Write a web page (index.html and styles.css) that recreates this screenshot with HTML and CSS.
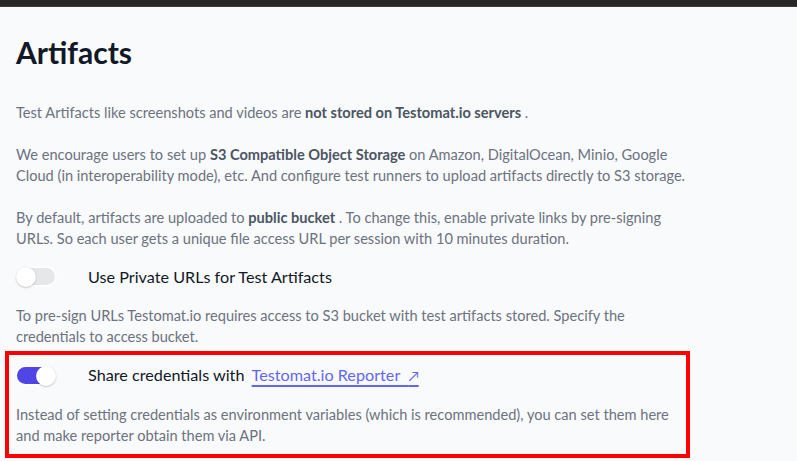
FILE: index.html
```html
<!DOCTYPE html>
<html lang="en">
<head>
<meta charset="utf-8">
<title>Artifacts</title>
<link rel="stylesheet" href="styles.css">
</head>
<body>
<div class="topbar"></div>
<main class="page">
  <h1 class="title">Artifacts</h1>
  <p class="text">Test Artifacts like screenshots and videos are <strong>not stored on Testomat.io servers</strong> .</p>
  <p class="text">We encourage users to set up <strong>S3 Compatible Object Storage</strong> on Amazon, DigitalOcean, Minio, Google Cloud (in interoperability mode), etc. And configure test runners to upload artifacts directly to S3 storage.</p>
  <p class="text">By default, artifacts are uploaded to <strong>public bucket</strong> . To change this, enable private links by pre-signing URLs. So each user gets a unique file access URL per session with 10 minutes duration.</p>

  <div class="setting">
    <div class="toggle-row">
      <span class="toggle-cell"><span class="toggle"><span class="knob"></span></span></span>
      <span class="label">Use Private URLs for Test Artifacts</span>
    </div>
    <p class="text desc">To pre-sign URLs Testomat.io requires access to S3 bucket with test artifacts stored. Specify the credentials to access bucket.</p>
  </div>

  <div class="setting highlighted">
    <div class="toggle-row">
      <span class="toggle-cell"><span class="toggle on"><span class="knob"></span></span></span>
      <span class="label">Share credentials with <a class="link" href="#">Testomat.io Reporter&nbsp;&nbsp;<span class="arrow">↗</span></a></span>
    </div>
    <p class="text desc">Instead of setting credentials as environment variables (which is recommended), you can set them here and make reporter obtain them via API.</p>
  </div>
</main>
</body>
</html>
```
FILE: styles.css
```css
html, body {
  margin: 0;
  padding: 0;
  background: #f9fafb;
}
body {
  font-family: Lato, "Liberation Sans", sans-serif;
  color: #6b7280;
  font-size: 14.6px;
  line-height: 21.5px;
}
.topbar {
  height: 6px;
  background: #272727;
  border-bottom: 1px solid #3a3a3a;
}
.page {
  padding: 0 16px;
  width: 670px;
}
.title {
  margin: 27px 0 0;
  font-size: 30px;
  line-height: 36px;
  font-weight: 700;
  color: #111827;
}
.text {
  margin: 20px 0 0;
}
.page > .title + .text {
  margin-top: 32px;
}
.text strong {
  font-weight: 700;
  color: #4b5563;
}
.setting {
  margin-top: 17px;
}
.toggle-row {
  display: flex;
  align-items: center;
  height: 20px;
}
.toggle-cell {
  width: 72px;
  flex: none;
  display: flex;
  align-items: center;
}
.toggle {
  position: relative;
  display: block;
  width: 38px;
  height: 17px;
  margin-left: 1px;
  border-radius: 9px;
  background: #e5e7eb;
  box-shadow: 0 0 0 1.5px #ffffff;
}
.toggle .knob {
  position: absolute;
  top: -1.5px;
  left: -1px;
  width: 20px;
  height: 20px;
  border-radius: 50%;
  background: #ffffff;
  box-shadow: 0 1px 2px rgba(0, 0, 0, 0.18), 0 0 0 0.5px rgba(0, 0, 0, 0.06);
}
.toggle.on {
  background: #4f46e5;
}
.toggle.on .knob {
  left: auto;
  right: -1px;
}
.label {
  font-size: 16.2px;
  color: #111827;
  line-height: 20px;
}
.link {
  margin-left: 3px;
  color: #6366f1;
  text-decoration: underline;
  text-decoration-thickness: 1.5px;
  text-underline-offset: 4px;
}
.arrow {
  font-size: 14px;
}
.desc {
  margin-top: 18px;
}
.highlighted {
  margin: 3px 0 0 -11px;
  width: 685px;
  box-sizing: border-box;
  border: 4px solid #ff0000;
  padding: 11px 0 7px 7px;
}
```
